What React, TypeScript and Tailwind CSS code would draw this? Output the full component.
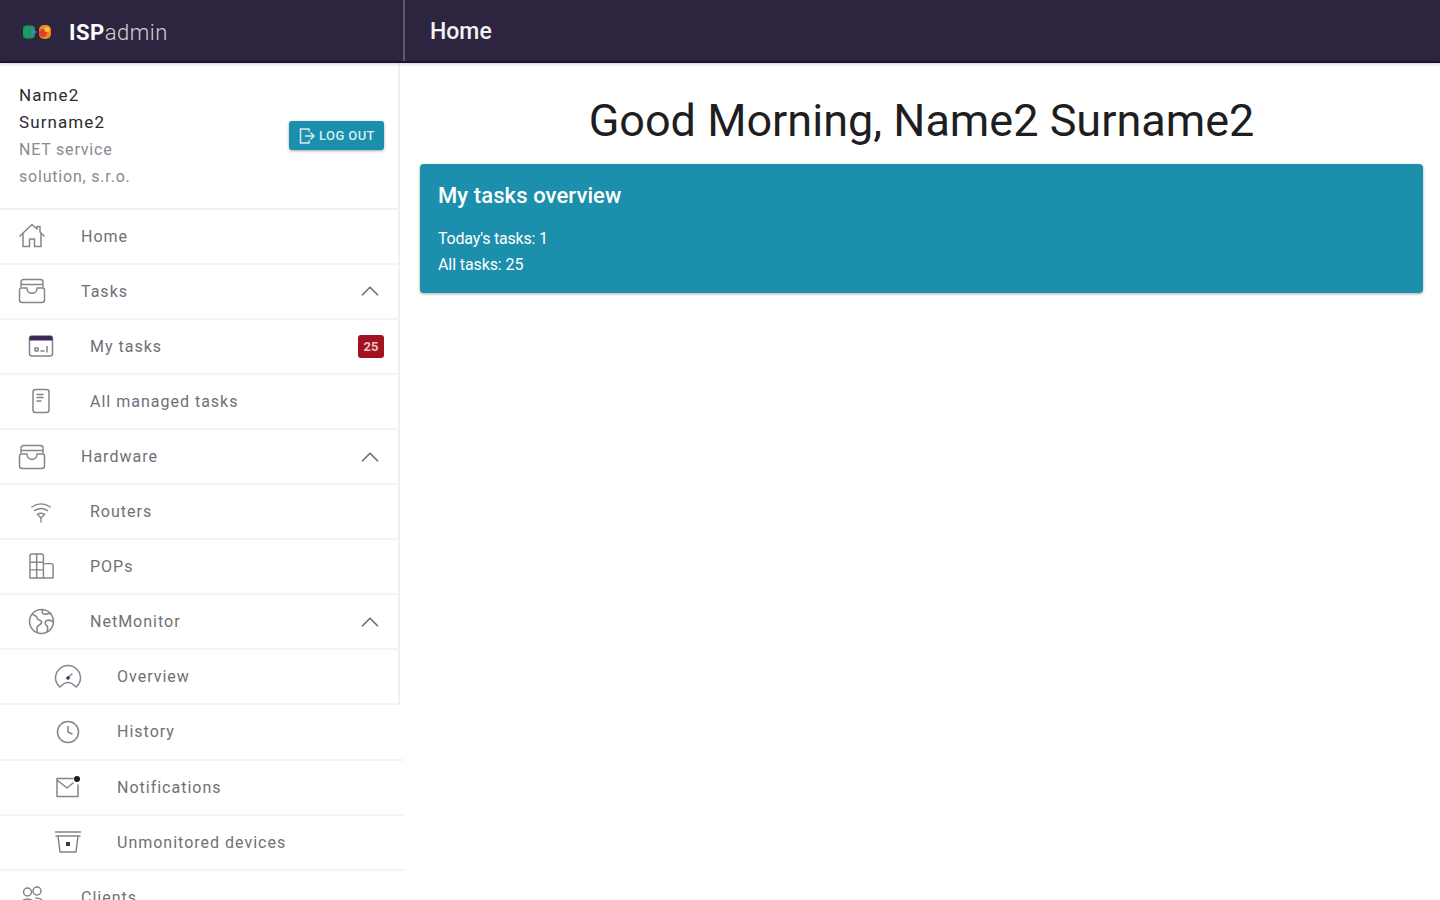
import React from 'react';
import { ChevronUp } from 'lucide-react';

const stroke = { fill: 'none', stroke: 'currentColor', strokeWidth: 1.5, strokeLinecap: 'round', strokeLinejoin: 'round' } as const;
const gray = 'text-[#85858c]';

const HouseIcon = () => (
  <svg viewBox="0 0 28 28" className={`w-[28px] h-[28px] ${gray}`}>
    <path d="M2 14 14 2.500 19 7V4.500h3v5.500l4 4" {...stroke} />
    <path d="M5 12v12.500h6.500V17h5v7.500H23V12" {...stroke} />
  </svg>
);

const TrayIcon = () => (
  <svg viewBox="0 0 28 26" className={`w-[28px] h-[26px] ${gray}`}>
    <path d="M3 9V4a2.500 2.500 0 0 1 2.500-2.500h17A2.500 2.500 0 0 1 25 4v5" {...stroke} />
    <path d="M1.500 12a2 2 0 0 1 2-2h5.500c0 7 10 7 10 0h5.500a2 2 0 0 1 2 2v10a2.500 2.500 0 0 1-2.500 2.500H4A2.500 2.500 0 0 1 1.500 22z" {...stroke} />
    <path d="M4 6.500h20" {...stroke} />
  </svg>
);

const CalendarIcon = () => (
  <svg viewBox="0 0 26 24" className={`w-[26px] h-[24px] ${gray}`}>
    <rect x="1.500" y="2" width="23" height="20" rx="2.500" {...stroke} />
    <path d="M1.500 4a2 2 0 0 1 2-2h19a2 2 0 0 1 2 2v2.500h-23z" fill="#3b2a55" />
    <path d="M7 17h3v-3H7zM13 17h3M19 12.500V18" {...stroke} />
  </svg>
);

const TaskDocIcon = () => (
  <svg viewBox="0 0 20 26" className={`w-[20px] h-[26px] ${gray}`}>
    <rect x="2" y="1.500" width="16" height="23" rx="2.500" {...stroke} />
    <path d="M6 6.500h6M6 9.500h6M6 13h4" {...stroke} />
  </svg>
);

const RouterIcon = () => (
  <svg viewBox="0 0 24 24" className={`w-[22px] h-[22px] ${gray}`}>
    <path d="M2 6.500c6-4.500 14-4.500 20 0M5 10.500c4.500-3 9.500-3 14 0M8 14.500c2.500-1.500 5.500-1.500 8 0L12 18.500zM12 18.500V23" {...stroke} />
  </svg>
);

const BuildingIcon = () => (
  <svg viewBox="0 0 28 28" className={`w-[27px] h-[27px] ${gray}`}>
    <path d="M2 26V3a2 2 0 0 1 2-2h10a2 2 0 0 1 2 2v23zM16 11h8a2 2 0 0 1 2 2v13H16M2 9.500h14M2 17.500h14M9 26V1" {...stroke} />
  </svg>
);

const GlobeIcon = () => (
  <svg viewBox="0 0 26 26" className={`w-[27px] h-[27px] ${gray}`}>
    <circle cx="13" cy="13" r="11.500" {...stroke} />
    <path d="M4 6c3 1 5 2 5 4s3 1 4 3-2 3-3 4-2 3-1 6M14 2c-1 2 0 4 2 4s4-1 6-1M24 13c-2-1-4-2-6-1s-2 3 0 5 1 4 0 6" {...stroke} />
  </svg>
);

const GaugeIcon = () => (
  <svg viewBox="0 0 28 26" className={`w-[28px] h-[26px] ${gray}`}>
    <path d="M6 23C3.500 21 1.500 17.500 1.500 14a12.500 12.500 0 0 1 25 0c0 3.500-2 7-4.500 9l-3.500-3c-2.500-2-6.500-2-9 0z" {...stroke} />
    <path d="M14 13.500 18 10" {...stroke} />
    <circle cx="14" cy="14" r="1.800" fill="#3b2a55" />
  </svg>
);

const ClockIcon = () => (
  <svg viewBox="0 0 24 24" className={`w-[24px] h-[24px] ${gray}`}>
    <circle cx="12" cy="12" r="10.500" {...stroke} />
    <path d="M12 6.500V12l4 2" {...stroke} />
  </svg>
);

const MailDotIcon = () => (
  <svg viewBox="0 0 26 24" className={`w-[26px] h-[24px] ${gray}`}>
    <path d="M18 3.500H2v18h21V10M2 5l10 8 6-5" {...stroke} />
    <circle cx="22" cy="4" r="3" fill="#1b1b24" />
  </svg>
);

const ArchiveIcon = () => (
  <svg viewBox="0 0 28 24" className={`w-[28px] h-[24px] ${gray}`}>
    <path d="M1.500 2h25M2 6h24M4 6l2 16h16l2-16" {...stroke} />
    <rect x="12" y="12" width="4" height="4" fill="#3a3a44" />
  </svg>
);

const PeopleIcon = () => (
  <svg viewBox="0 0 24 24" className={`w-[24px] h-[24px] ${gray}`}>
    <circle cx="7.500" cy="7" r="4" {...stroke} />
    <circle cx="17" cy="6" r="4" {...stroke} />
    <path d="M1 22v-3c0-3 3-5 6.500-5s6.500 2 6.500 5v3M16 13c4 0 7 2 7 5v4" {...stroke} />
  </svg>
);

const LogoutIcon = () => (
  <svg viewBox="0 0 18 18" className="w-[18px] h-[18px]">
    <path d="M11 4.500V2H2.500v14H11v-2.500M7 9h9M12.500 5.500 16 9l-3.500 3.500" fill="none" stroke="currentColor" strokeWidth="1.500" />
  </svg>
);

const Logo = () => (
  <svg viewBox="0 0 30 16" className="w-[30px] h-[16px]">
    <rect x="1" y="1.500" width="12" height="13" rx="4" fill="#1f9a5c" />
    <path d="M9 4l6 4-6 4z" fill="#4a7fb5" />
    <rect x="17" y="1" width="12" height="14" rx="5" fill="#f08a1d" />
    <circle cx="21" cy="9" r="4" fill="#e2412f" />
    <circle cx="25" cy="5.500" r="2.500" fill="#fbbd3c" />
  </svg>
);

type NavItem = { label: string; icon: React.ReactNode; level: 0 | 1 | 2; open?: boolean; badge?: string };

const items: NavItem[] = [
  { label: 'Home', level: 0, icon: <HouseIcon /> },
  { label: 'Tasks', level: 0, open: true, icon: <TrayIcon /> },
  { label: 'My tasks', level: 1, badge: '25', icon: <CalendarIcon /> },
  { label: 'All managed tasks', level: 1, icon: <TaskDocIcon /> },
  { label: 'Hardware', level: 0, open: true, icon: <TrayIcon /> },
  { label: 'Routers', level: 1, icon: <RouterIcon /> },
  { label: 'POPs', level: 1, icon: <BuildingIcon /> },
  { label: 'NetMonitor', level: 1, open: true, icon: <GlobeIcon /> },
  { label: 'Overview', level: 2, icon: <GaugeIcon /> },
  { label: 'History', level: 2, icon: <ClockIcon /> },
  { label: 'Notifications', level: 2, icon: <MailDotIcon /> },
  { label: 'Unmonitored devices', level: 2, icon: <ArchiveIcon /> },
  { label: 'Clients', level: 0, icon: <PeopleIcon /> },
];

const levelPad = { 0: 'pl-[18px]', 1: 'pl-[27px]', 2: 'pl-[54px]' };

const NavRow = ({ item, index }: { item: NavItem; index: number }) => (
  <div
    className={`flex items-center h-[55.1px] shrink-0 border-b-2 border-b-[#f4f4f6] pr-[14px] ${levelPad[item.level]} ${
      index < 9 ? 'w-[400px] border-r-2 border-r-[#f0f0f2]' : 'w-[404px]'
    }`}
  >
    <span className="w-[28px] flex justify-center items-center shrink-0">{item.icon}</span>
    <span className="ml-[35px] pt-[1px] text-[16px] tracking-[1px] text-[#707076]">{item.label}</span>
    <span className="ml-auto flex items-center">
      {item.open && <ChevronUp size={30} strokeWidth={1.4} className="text-[#707076] -mr-[1px]" />}
      {item.badge && (
        <span className="bg-[#a3121f] text-[#e8c4c8] text-[13px] font-bold leading-none rounded-[3px] w-[26px] h-[23px] flex items-center justify-center">
          {item.badge}
        </span>
      )}
    </span>
  </div>
);

export default function App() {
  return (
    <div className="h-[900px] w-[1440px] overflow-hidden bg-white flex flex-col font-['Roboto',sans-serif]">
      {/* top bar */}
      <header className="h-[63px] shrink-0 bg-[#2d253f] border-b-2 border-[#1a1430] flex z-10 shadow-[0_1px_3px_rgba(0,0,0,0.2)]">
        <div className="w-[405px] shrink-0 flex items-center pl-[22px] pt-[3px] border-r-2 border-[#5d5868]">
          <Logo />
          <span className="ml-[17px] text-[22px] tracking-[0.5px] text-white font-bold">
            ISP<span className="font-light text-[#cfcfd6]">admin</span>
          </span>
        </div>
        <div className="flex items-center pl-[25px] pt-[4px] text-[23px] font-medium text-[#f2f2f4]">Home</div>
      </header>

      <div className="flex flex-1 min-h-0">
        {/* sidebar */}
        <aside className="w-[404px] shrink-0 flex flex-col overflow-hidden">
          <div className="w-[400px] h-[146.6px] shrink-0 flex items-center justify-between pl-[19px] pr-[14px] pt-[1px] border-b-2 border-b-[#f0f0f2] border-r-2 border-r-[#f0f0f2]">
            <div className="text-[16px] leading-[27px] tracking-[0.8px]">
              <div className="text-[17px] tracking-[1.1px] text-[#2b2b30]">Name2</div>
              <div className="text-[17px] tracking-[1.1px] text-[#2b2b30]">Surname2</div>
              <div className="text-[#8a8a90]">NET service</div>
              <div className="text-[#8a8a90]">solution, s.r.o.</div>
            </div>
            <button className="w-[95px] h-[29px] bg-[#1b8fab] text-[#d8eef3] rounded-[3px] flex items-center justify-center gap-[3px] text-[13px] font-medium tracking-[0.4px] shadow-[0_1px_3px_rgba(0,0,0,0.35)]">
              <LogoutIcon />
              LOG OUT
            </button>
          </div>
          {items.map((item, i) => (
            <NavRow key={item.label} item={item} index={i} />
          ))}
        </aside>

        {/* main */}
        <main className="flex-1 pl-[16px] pr-[17px]">
          <h1 className="mt-[28px] text-center text-[45px] leading-[60px] font-normal text-[#1e1e22]">
            Good Morning, Name2 Surname2
          </h1>
          <section className="mt-[13px] h-[129px] bg-[#1b8fab] text-white rounded-[4px] pt-[18px] pl-[18px] shadow-[0_1px_3px_rgba(0,0,0,0.35)]">
            <div className="text-[22px] leading-[28px] font-medium tracking-[0.1px]">My tasks overview</div>
            <div className="mt-[16px] text-[16px] leading-[26px] tracking-[-0.2px]">Today's tasks: 1</div>
            <div className="text-[16px] leading-[26px] tracking-[-0.1px]">All tasks: 25</div>
          </section>
        </main>
      </div>
    </div>
  );
}
